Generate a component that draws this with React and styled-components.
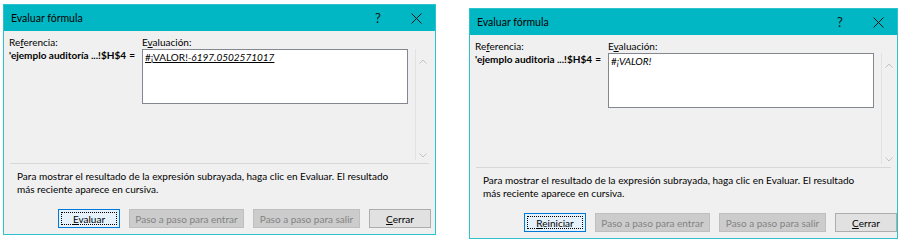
import React from 'react';
import styled, { createGlobalStyle } from 'styled-components';

const GlobalStyle = createGlobalStyle`
    body {
        margin: 0;
        background: #ffffff;
        font-family: Lato, "Liberation Sans", sans-serif;
        font-size: 10px;
        color: #000;
    }
`;

const Page = styled.div`
    display: flex;
    align-items: flex-start;
    gap: 33px;
    padding: 4px 0 0 3px;
    width: 903px;
    height: 241px;
    box-sizing: border-box;
`;

const Dialog = styled.div`
    width: ${props => props.width}px;
    margin-top: ${props => props.offset || 0}px;
    border: 1px solid #2cc3cd;
    background: #f0f0f0;
    display: flex;
    flex-direction: column;
    box-sizing: border-box;
`;

const TitleBar = styled.div`
    height: 26px;
    background: #00b7c3;
    display: flex;
    align-items: center;
    padding-left: 7px;
`;

const Title = styled.div`
    flex: 1;
    font-size: 10.5px;
    line-height: 26px;
    color: #000;
`;

const TitleButton = styled.div`
    width: 38px;
    height: 26px;
    display: flex;
    align-items: center;
    justify-content: center;
    font-size: 13px;
    color: #111;
`;

const Body = styled.div`
    display: flex;
    flex-direction: column;
    padding: 5px 0 6px 5px;
`;

const TopArea = styled.div`
    display: flex;
    height: 124px;
`;

const LabelCol = styled.div`
    width: 133px;
    flex-shrink: 0;
    display: flex;
    flex-direction: column;
`;

const Label = styled.div`
    line-height: 13px;
    height: 13px;
    white-space: nowrap;
`;

const RefRow = styled.div`
    display: flex;
    justify-content: space-between;
    padding-right: 7px;
    line-height: 13px;
    font-weight: bold;
    white-space: nowrap;
`;

const EvalCol = styled.div`
    flex-shrink: 0;
    display: flex;
    flex-direction: column;
`;

const EvalBox = styled.div`
    width: 266px;
    height: 55px;
    background: #fff;
    border: 1px solid #828790;
    box-sizing: border-box;
    padding: 1px 2px;
    line-height: 13px;
`;

const Underlined = styled.span`
    text-decoration: underline;
    font-style: ${props => (props.italic ? 'italic' : 'normal')};
`;

const Italic = styled.span`
    font-style: italic;
`;

const ScrollCol = styled.div`
    flex: 1;
    margin: 13px 0 0 7px;
    height: 111px;
    border-left: 1px solid #e2e2e2;
    display: flex;
    flex-direction: column;
    justify-content: space-between;
    align-items: flex-start;
    padding: 10px 0 2px 3px;
    box-sizing: border-box;
`;

const Separator = styled.div`
    margin: 3px 6px 0 1px;
    height: 1px;
    background: #d8d8d8;
`;

const Message = styled.div`
    margin-top: 6px;
    padding-left: 8px;
    line-height: 13px;
    white-space: nowrap;
`;

const ButtonRow = styled.div`
    display: flex;
    gap: 9px;
    margin-top: 13px;
    padding-left: 49px;
`;

const Button = styled.div`
    position: relative;
    width: ${props => props.width}px;
    height: 19px;
    box-sizing: border-box;
    display: flex;
    align-items: center;
    justify-content: center;
    background: ${props => (props.disabled ? '#cccccc' : props.focused ? '#e5f1fb' : '#e1e1e1')};
    border: 1px solid ${props => (props.disabled ? '#bfbfbf' : props.focused ? '#0078d7' : '#adadad')};
    color: ${props => (props.disabled ? '#838383' : '#000')};
    white-space: nowrap;
    &::after {
        content: '';
        display: ${props => (props.focused ? 'block' : 'none')};
        position: absolute;
        inset: 2px;
        border: 1px dotted #000;
    }
`;

const Key = styled.span`
    text-decoration: underline;
`;

const Chevron = ({ up }) => (
    <svg width="8" height="5" viewBox="0 0 8 5">
        <polyline
            points={up ? '0.5,4.5 4,1 7.5,4.5' : '0.5,0.5 4,4 7.5,0.5'}
            fill="none"
            stroke="#c2c2c2"
            strokeWidth="1"
        />
    </svg>
);

const CloseIcon = () => (
    <svg width="11" height="11" viewBox="0 0 11 11">
        <path d="M0.5 0.5 L10.5 10.5 M10.5 0.5 L0.5 10.5" stroke="#111" strokeWidth="1" />
    </svg>
);

const EvalDialog = ({ width, offset, reference, children, firstButton }) => (
    <Dialog width={width} offset={offset}>
        <TitleBar>
            <Title>Evaluar fórmula</Title>
            <TitleButton>?</TitleButton>
            <TitleButton><CloseIcon /></TitleButton>
        </TitleBar>
        <Body>
            <TopArea>
                <LabelCol>
                    <Label>Re<Key>f</Key>erencia:</Label>
                    <RefRow>
                        <span>{reference}</span>
                        <span>=</span>
                    </RefRow>
                </LabelCol>
                <EvalCol>
                    <Label>E<Key>v</Key>aluación:</Label>
                    <EvalBox>{children}</EvalBox>
                </EvalCol>
                <ScrollCol>
                    <Chevron up />
                    <Chevron />
                </ScrollCol>
            </TopArea>
            <Separator />
            <Message>
                Para mostrar el resultado de la expresión subrayada, haga clic en Evaluar. El resultado
                <br />
                más reciente aparece en cursiva.
            </Message>
            <ButtonRow>
                <Button width={62} focused>{firstButton}</Button>
                <Button width={115} disabled>Paso a paso para entrar</Button>
                <Button width={107} disabled>Paso a paso para salir</Button>
                <Button width={62}><Key>C</Key>errar</Button>
            </ButtonRow>
        </Body>
    </Dialog>
);

export default function App() {
    return (
        <>
            <GlobalStyle />
            <Page>
                <EvalDialog
                    width={433}
                    reference="'ejemplo auditoría ...!$H$4"
                    firstButton={<span><Key>E</Key>valuar</span>}
                >
                    <Underlined>#¡VALOR!</Underlined>
                    <Underlined italic>-6197.0502571017</Underlined>
                </EvalDialog>
                <EvalDialog
                    width={429}
                    offset={4}
                    reference="'ejemplo auditoria ...!$H$4"
                    firstButton={<span><Key>R</Key>einiciar</span>}
                >
                    #<Italic>¡VALOR!</Italic>
                </EvalDialog>
            </Page>
        </>
    );
}
